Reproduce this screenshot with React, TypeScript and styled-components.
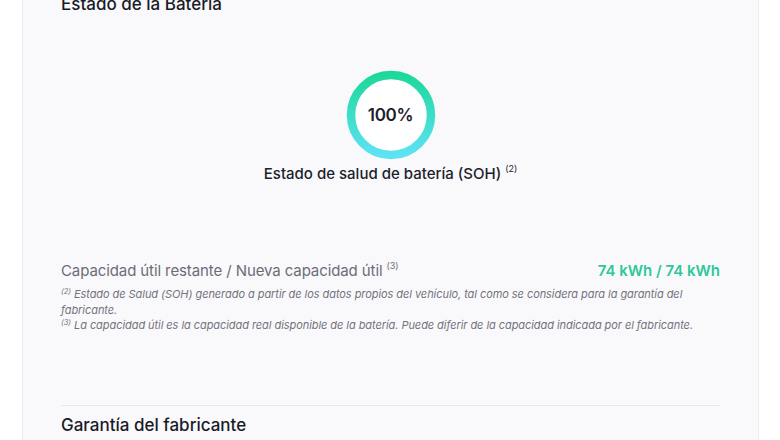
import React, { ReactElement } from 'react';
import styled, { createGlobalStyle } from 'styled-components';

const GlobalStyle = createGlobalStyle`
  html, body {
    margin: 0;
    padding: 0;
    background: #ffffff;
    font-family: Inter, "Noto Sans", "Liberation Sans", sans-serif;
    color: #1d1e2c;
    overflow: hidden;
  }
`;

const footnotes = [
  {
    ref: 2,
    text: 'Estado de Salud (SOH) generado a partir de los datos propios del vehículo, tal como se considera para la garantía del fabricante.',
  },
  {
    ref: 3,
    text: 'La capacidad útil es la capacidad real disponible de la batería. Puede diferir de la capacidad indicada por el fabricante.',
  },
];

const HealthRing = ({ percent }: { percent: number }): ReactElement => (
  <RingBox>
    <svg width="90" height="90" viewBox="0 0 90 90">
      <defs>
        <linearGradient id="soh-grad" x1="0" y1="0" x2="0" y2="1">
          <stop offset="0%" stopColor="#1cd99a" />
          <stop offset="100%" stopColor="#5ee2f4" />
        </linearGradient>
      </defs>
      <circle cx="45" cy="45" r="40" fill="#ffffff" stroke="url(#soh-grad)" strokeWidth="8.5" />
    </svg>
    <RingLabel>{percent}%</RingLabel>
  </RingBox>
);

export default function App(): ReactElement {
  return (
    <>
      <GlobalStyle />
      <Card>
        <Title>Estado de la Batería</Title>
        <Health>
          <HealthRing percent={100} />
          <HealthCaption>
            Estado de salud de batería (SOH) <Sup>(2)</Sup>
          </HealthCaption>
        </Health>

        <CapacityRow>
          <CapacityLabel>
            Capacidad útil restante / Nueva capacidad útil <Sup>(3)</Sup>
          </CapacityLabel>
          <CapacityValue>74 kWh / 74 kWh</CapacityValue>
        </CapacityRow>

        <Notes>
          {footnotes.map(n => (
            <Note key={n.ref}>
              <NoteRef>({n.ref})</NoteRef> {n.text}
            </Note>
          ))}
        </Notes>

        <Divider />
        <Title>Garantía del fabricante</Title>
      </Card>
    </>
  );
}

const Card = styled.div`
  box-sizing: border-box;
  width: 737px;
  margin: -32px 0 0 22px;
  padding: 24px 38px 40px;
  background: #f9f9fb;
  border-left: 1.5px solid #ececf1;
  border-right: 1.5px solid #ececf1;
  display: flex;
  flex-direction: column;
`;

const Title = styled.h2`
  margin: 0;
  font-size: 17px;
  line-height: 24px;
  font-weight: 500;
  color: #1a1b28;
`;

const Health = styled.div`
  display: flex;
  flex-direction: column;
  align-items: center;
  gap: 4px;
  margin-top: 54px;
`;

const RingBox = styled.div`
  position: relative;
  width: 90px;
  height: 90px;
  svg {
    display: block;
  }
`;

const RingLabel = styled.span`
  position: absolute;
  inset: 0;
  display: flex;
  align-items: center;
  justify-content: center;
  font-size: 17px;
  font-weight: 600;
  letter-spacing: -0.3px;
  color: #1d1e2c;
`;

const HealthCaption = styled.div`
  font-size: 15px;
  line-height: 20px;
  font-weight: 500;
  color: #1d1e2c;
`;

const Sup = styled.sup`
  font-size: 9px;
  font-weight: 400;
  vertical-align: 7px;
  line-height: 0;
`;

const CapacityRow = styled.div`
  display: flex;
  justify-content: space-between;
  align-items: baseline;
  margin-top: 76px;
  line-height: 22px;
`;

const CapacityLabel = styled.span`
  font-size: 15px;
  color: #6c6c78;
  letter-spacing: -0.1px;
`;

const CapacityValue = styled.span`
  font-size: 15px;
  font-weight: 600;
  color: #2ec79c;
`;

const Notes = styled.div`
  margin-top: 5px;
  padding-right: 20px;
`;

const Note = styled.p`
  margin: 0;
  font-size: 11px;
  line-height: 15.5px;
  font-style: italic;
  letter-spacing: -0.06px;
  color: #73737e;
`;

const NoteRef = styled.sup`
  font-size: 7.5px;
  vertical-align: 4px;
  line-height: 0;
`;

const Divider = styled.hr`
  margin: 71px 0 7px;
  border: none;
  border-top: 1.5px solid #e6e6eb;
`;
